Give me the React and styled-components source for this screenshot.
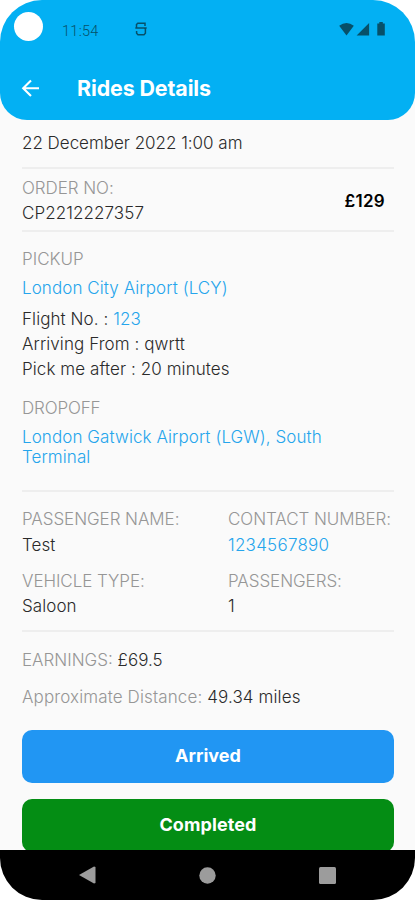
import React from "react";
import styled, { createGlobalStyle } from "styled-components";

const GlobalStyle = createGlobalStyle`
  * { box-sizing: border-box; }
  body { margin: 0; background: #fff; }
`;

const Phone = styled.div`
  width: 415px;
  height: 900px;
  display: flex;
  flex-direction: column;
  overflow: hidden;
  border-radius: 42px;
  background: #fafafa;
  font-family: Inter, sans-serif;
  font-size: 17px;
  font-weight: 300;
  color: #2a2a2a;
`;

const Header = styled.header`
  flex: none;
  height: 120px;
  background: #03b0f3;
  border-radius: 0 0 27px 27px;
`;

const StatusBar = styled.div`
  height: 58px;
  display: flex;
  align-items: center;
  padding: 0 28px 0 14px;
  color: #075069;
`;

const Camera = styled.div`
  width: 29px;
  height: 29px;
  margin: 0 19px 5px 0;
  border-radius: 50%;
  background: #fff;
`;

const Clock = styled.time`
  width: 73px;
  padding-top: 4px;
  font-family: Roboto, sans-serif;
  font-size: 14.5px;
  font-weight: 300;
  letter-spacing: 0.3px;
`;

const StatusIcons = styled.div`
  display: flex;
  align-items: center;
  margin-left: auto;
`;

const TitleBar = styled.div`
  height: 60px;
  display: flex;
  align-items: center;
  gap: 36px;
  padding-left: 21px;
  color: #fff;
`;

const Title = styled.h1`
  margin: 0;
  font-size: 21.4px;
  font-weight: 700;
  line-height: 24px;
  letter-spacing: -0.1px;
`;

const Content = styled.main`
  flex: 1;
  min-height: 0;
  overflow: hidden;
  padding: 0 21px 0 22px;
`;

const Section = styled.section`
  height: ${(p) => p.$height}px;
  padding-top: ${(p) => p.$top || 0}px;
  border-bottom: ${(p) => (p.$plain ? "none" : "2px solid #eeeeee")};
`;

const OrderSection = styled(Section)`
  display: flex;
  justify-content: space-between;
  padding-right: 9px;
`;

const Line = styled.p`
  margin: 0 0 ${(p) => p.$gap || 0}px;
  line-height: ${(p) => p.$leading || 25}px;
  color: ${(p) => (p.$link ? "#25a5ec" : "inherit")};
  letter-spacing: ${(p) => p.$tracking ?? 0.08}px;
  white-space: nowrap;
`;

const Label = styled(Line)`
  color: #969696;
`;

const Muted = styled.span`
  color: #969696;
`;

const Link = styled.span`
  color: #25a5ec;
`;

const Price = styled.strong`
  padding-top: 12px;
  line-height: 26px;
  font-size: 17px;
  font-weight: 600;
  letter-spacing: 0.3px;
  color: #000;
`;

const Details = styled.div`
  display: grid;
  grid-template-columns: 206px 1fr;
  row-gap: 10.5px;
`;

const ActionButton = styled.button`
  display: block;
  width: 100%;
  height: 53px;
  margin: 0 0 16px;
  padding: 0 0 1px;
  border: 0;
  border-radius: 10px;
  background: ${(p) => p.$color};
  color: #fff;
  font: 700 18px/50px Inter, sans-serif;
  letter-spacing: ${(p) => p.$tracking || 0}px;
`;

const NavBar = styled.nav`
  flex: none;
  height: 50px;
  display: flex;
  align-items: center;
  justify-content: space-between;
  padding: 0 79px;
  background: #000;
`;

function Detail({ label, value, link, tracking }) {
  return (
    <div>
      <Label $tracking={-0.06} $leading={25.5}>{label}</Label>
      <Line $link={link} $tracking={tracking} $leading={25.5}>{value}</Line>
    </div>
  );
}

export default function App() {
  return (
    <>
      <GlobalStyle />
      <Phone>
        <Header>
          <StatusBar>
            <Camera />
            <Clock>11:54</Clock>
            <svg width="12" height="14" viewBox="0 0 12 14" fill="none" stroke="currentColor" strokeWidth="1.5">
              <path d="M10 4V1.2H2.8L1.5 2.5V6h7.8L10.4 7v4.3L9 12.7H3L1.6 11.3V9M.3 6h11.4" />
            </svg>
            <StatusIcons>
              <svg width="48" height="15" viewBox="0 0 48 15" fill="currentColor">
                <path d="M.2 3.7Q7.5-1.5 14.8 3.7L7.5 13.5Z" />
                <path d="M17.6 13.5 30.1 1v12.5Z" />
                <path d="M38.3 1.5h2V0h3.5v1.5h2v12h-7.5Z" />
              </svg>
            </StatusIcons>
          </StatusBar>
          <TitleBar>
            <svg width="20" height="20" viewBox="0 0 20 20" fill="none" stroke="currentColor" strokeWidth="2.1">
              <path d="M18 10.3H2.5M10 2.5 2.2 10.3 10 18" />
            </svg>
            <Title>Rides Details</Title>
          </TitleBar>
        </Header>
        <Content>
          <Section $height={49} $top={11}>
            <Line $tracking={-0.02}>22 December 2022 1:00 am</Line>
          </Section>
          <OrderSection $height={63} $top={7}>
            <div>
              <Label $tracking={-0.06}>ORDER NO:</Label>
              <Line $tracking={0.08}>CP2212227357</Line>
            </div>
            <Price>£129</Price>
          </OrderSection>
          <Section $height={260} $top={15}>
            <Label $gap={4} $tracking={0}>PICKUP</Label>
            <Line $link $gap={6}>London City Airport (LCY)</Line>
            <Line>Flight No. : <Link>123</Link></Line>
            <Line>Arriving From : qwrtt</Line>
            <Line $gap={14}>Pick me after : 20 minutes</Line>
            <Label $gap={6} $tracking={-0.15}>DROPOFF</Label>
            <Line $link $leading={20}>
              London Gatwick Airport (LGW), South
              <br />
              Terminal
            </Line>
          </Section>
          <Section $height={140} $top={15}>
            <Details>
              <Detail label="PASSENGER NAME:" value="Test" />
              <Detail label="CONTACT NUMBER:" value="1234567890" link tracking={0.25} />
              <Detail label="VEHICLE TYPE:" value="Saloon" />
              <Detail label="PASSENGERS:" value="1" />
            </Details>
          </Section>
          <Section $height={98} $top={16} $plain>
            <Line $gap={12} $tracking={0}><Muted>EARNINGS:</Muted> £69.5</Line>
            <Line $tracking={0.12}><Muted>Approximate Distance:</Muted> 49.34 miles</Line>
          </Section>
          <ActionButton $color="#2196f3">Arrived</ActionButton>
          <ActionButton $color="#048d14" $tracking={0.1}>Completed</ActionButton>
        </Content>
        <NavBar>
          <svg width="17" height="18" viewBox="0 0 17 18" fill="#9c9c9c"><path d="M0 9 15 .5 16.5 1v16L15 17.5Z" /></svg>
          <svg width="17" height="17" viewBox="0 0 17 17" fill="#9c9c9c"><circle cx="8.5" cy="8.5" r="8.2" /></svg>
          <svg width="17" height="17" viewBox="0 0 17 17" fill="#9c9c9c"><rect width="17" height="17" rx="1.5" /></svg>
        </NavBar>
      </Phone>
    </>
  );
}
